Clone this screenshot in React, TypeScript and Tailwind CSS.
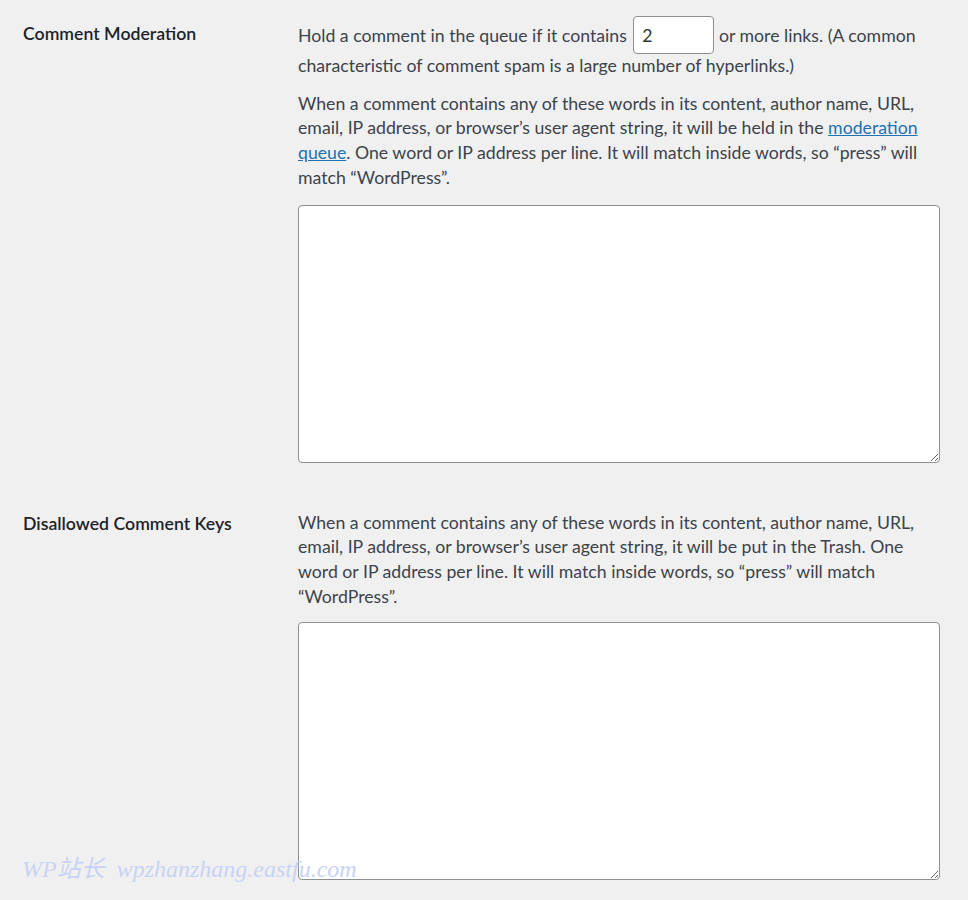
export default function App() {
  const font = { fontFamily: "Lato, 'Liberation Sans', sans-serif" };

  return (
    <div
      className="relative min-h-[900px] w-[968px] overflow-hidden bg-[#f0f0f1] text-[17.7px] leading-[24.7px] text-[#3c434a]"
      style={font}
    >
      {/* Comment Moderation */}
      <div className="flex pt-[16px]">
        <div className="w-[298px] shrink-0 pl-[23px] pt-[6px] font-semibold text-[#1d2327]">
          Comment Moderation
        </div>
        <div className="w-[642px]">
          <p>
            Hold a comment in the queue if it contains{" "}
            <input
              type="text"
              defaultValue="2"
              className="ml-[2px] inline-block h-[38px] w-[81px] rounded-[4px] border border-[#8c8f94] bg-white px-[8px] align-baseline text-[17.7px] text-[#2c3338] outline-none"
            />{" "}
            or more links. (A common characteristic of comment spam is a large number of hyperlinks.)
          </p>
          <p className="mt-[13px]">
            When a comment contains any of these words in its content, author name, URL, email, IP address, or
            browser’s user agent string, it will be held in the{" "}
            <a href="#" className="text-[#2271b1] underline">
              moderation queue
            </a>
            . One word or IP address per line. It will match inside words, so “press” will match “WordPress”.
          </p>
          <textarea className="mt-[14px] block h-[258px] w-[642px] rounded-[4px] border border-[#8c8f94] bg-white p-2 outline-none" />
        </div>
      </div>

      {/* Disallowed Comment Keys */}
      <div className="flex pt-[48px]">
        <div className="w-[298px] shrink-0 pl-[23px] pt-[1px] font-semibold text-[#1d2327]">
          Disallowed Comment Keys
        </div>
        <div className="w-[642px]">
          <p>
            When a comment contains any of these words in its content, author name, URL, email, IP address, or
            browser’s user agent string, it will be put in the Trash. One word or IP address per line. It will
            match inside words, so “press” will match “WordPress”.
          </p>
          <textarea className="mt-[13px] block h-[258px] w-[642px] rounded-[4px] border border-[#8c8f94] bg-white p-2 outline-none" />
        </div>
      </div>

      {/* watermark */}
      <div
        className="pointer-events-none absolute left-[22px] top-[853px] text-[24px] italic leading-[32px] text-[#c8d3f4]"
        style={{ fontFamily: "'Liberation Serif', 'Noto Sans CJK SC', serif" }}
      >
        WP站长 <span className="ml-[6px]">wpzhanzhang.eastfu.com</span>
      </div>
    </div>
  );
}
